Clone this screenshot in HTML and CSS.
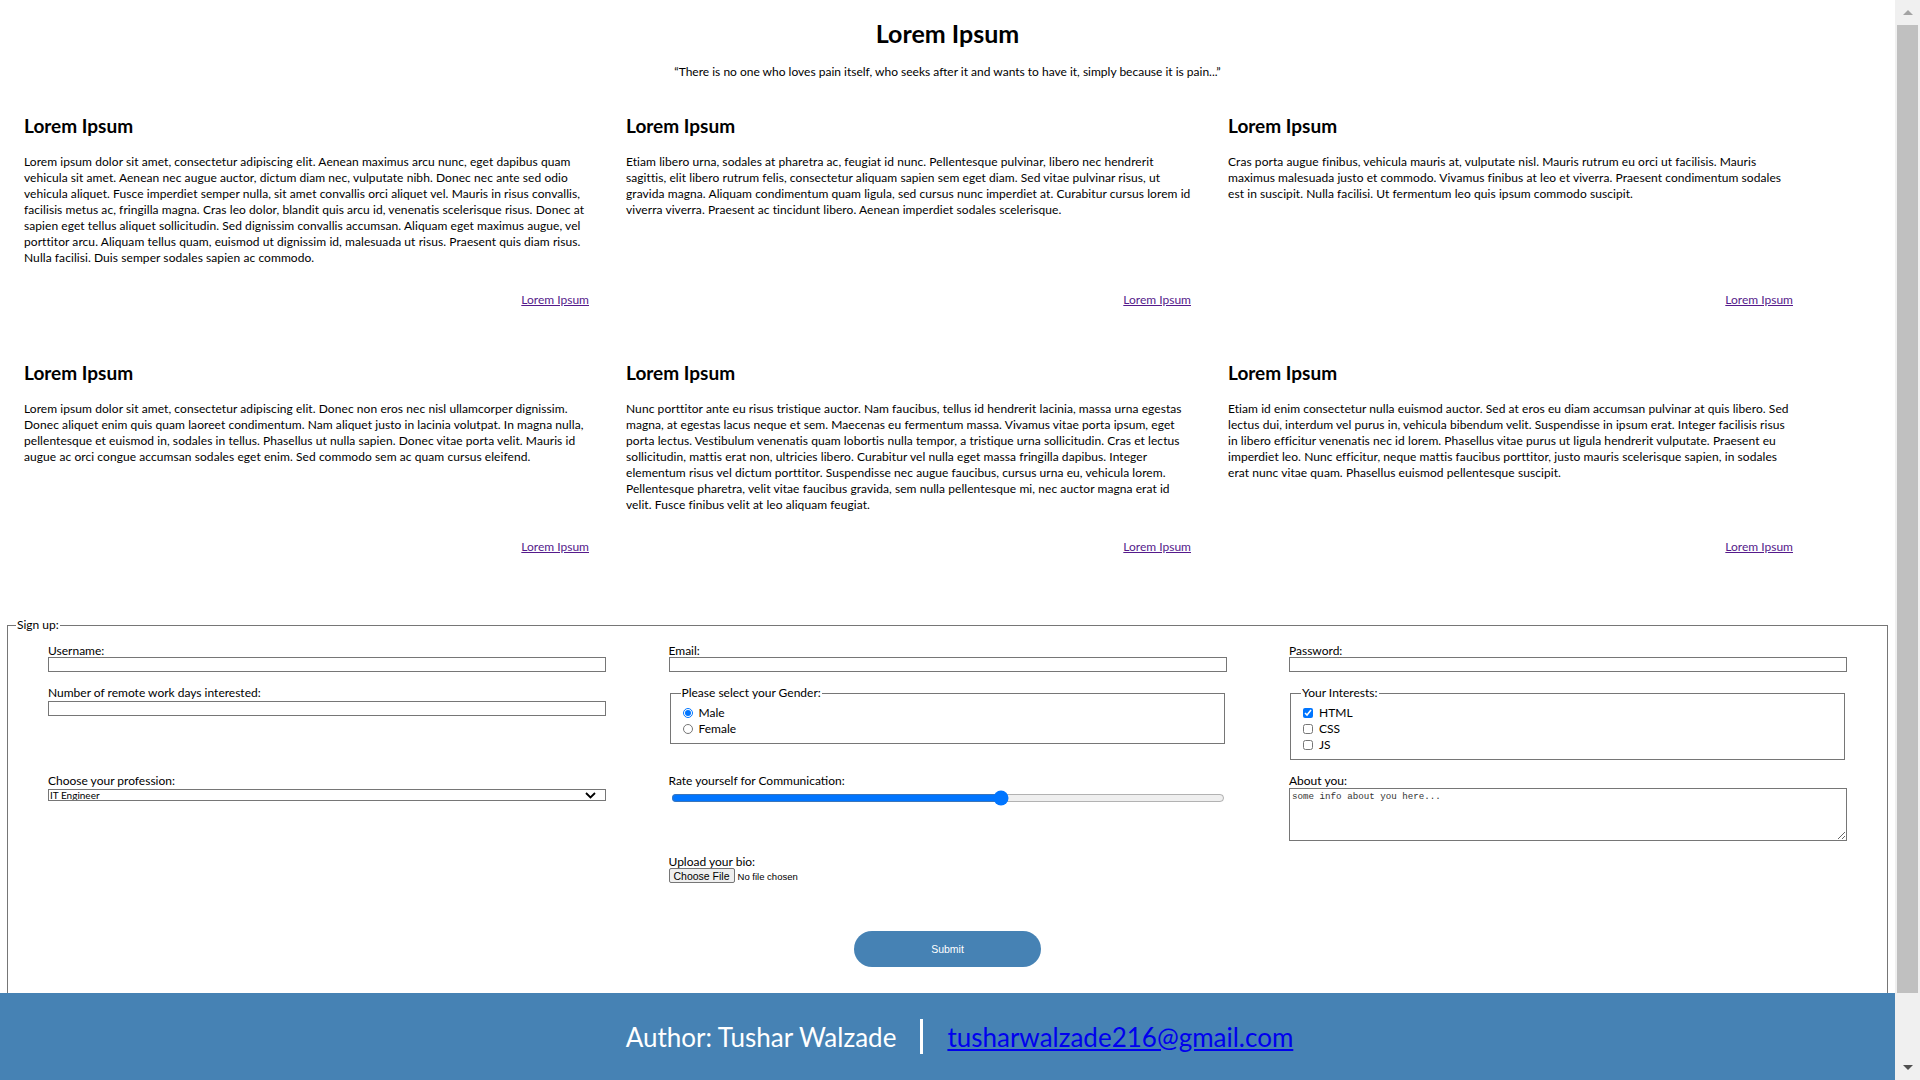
FILE: index.html
```html
<!DOCTYPE html>
<html lang="en">
<head>
<meta charset="utf-8">
<title>Lorem Ipsum</title>
<link rel="stylesheet" href="styles.css">
</head>
<body>
<div class="page">
  <header class="intro">
    <h1 class="title">Lorem Ipsum</h1>
    <p class="quote">“There is no one who loves pain itself, who seeks after it and wants to have it, simply because it is pain...”</p>
  </header>

  <main class="cards">
    <article class="card">
      <h3 class="card-title">Lorem Ipsum</h3>
      <p class="card-text">Lorem ipsum dolor sit amet, consectetur adipiscing elit. Aenean maximus arcu nunc, eget dapibus quam vehicula sit amet. Aenean nec augue auctor, dictum diam nec, vulputate nibh. Donec nec ante sed odio vehicula aliquet. Fusce imperdiet semper nulla, sit amet convallis orci aliquet vel. Mauris in risus convallis, facilisis metus ac, fringilla magna. Cras leo dolor, blandit quis arcu id, venenatis scelerisque risus. Donec at sapien eget tellus aliquet sollicitudin. Sed dignissim convallis accumsan. Aliquam eget maximus augue, vel porttitor arcu. Aliquam tellus quam, euismod ut dignissim id, malesuada ut risus. Praesent quis diam risus. Nulla facilisi. Duis semper sodales sapien ac commodo.</p>
      <p class="card-link"><a href="#">Lorem Ipsum</a></p>
    </article>
    <article class="card">
      <h3 class="card-title">Lorem Ipsum</h3>
      <p class="card-text">Etiam libero urna, sodales at pharetra ac, feugiat id nunc. Pellentesque pulvinar, libero nec hendrerit sagittis, elit libero rutrum felis, consectetur aliquam sapien sem eget diam. Sed vitae pulvinar risus, ut gravida magna. Aliquam condimentum quam ligula, sed cursus nunc imperdiet at. Curabitur cursus lorem id viverra viverra. Praesent ac tincidunt libero. Aenean imperdiet sodales scelerisque.</p>
      <p class="card-link"><a href="#">Lorem Ipsum</a></p>
    </article>
    <article class="card">
      <h3 class="card-title">Lorem Ipsum</h3>
      <p class="card-text">Cras porta augue finibus, vehicula mauris at, vulputate nisl. Mauris rutrum eu orci ut facilisis. Mauris maximus malesuada justo et commodo. Vivamus finibus at leo et viverra. Praesent condimentum sodales est in suscipit. Nulla facilisi. Ut fermentum leo quis ipsum commodo suscipit.</p>
      <p class="card-link"><a href="#">Lorem Ipsum</a></p>
    </article>
    <article class="card">
      <h3 class="card-title">Lorem Ipsum</h3>
      <p class="card-text">Lorem ipsum dolor sit amet, consectetur adipiscing elit. Donec non eros nec nisl ullamcorper dignissim. Donec aliquet enim quis quam laoreet condimentum. Nam aliquet justo in lacinia volutpat. In magna nulla, pellentesque et euismod in, sodales in tellus. Phasellus ut nulla sapien. Donec vitae porta velit. Mauris id augue ac orci congue accumsan sodales eget enim. Sed commodo sem ac quam cursus eleifend.</p>
      <p class="card-link"><a href="#">Lorem Ipsum</a></p>
    </article>
    <article class="card">
      <h3 class="card-title">Lorem Ipsum</h3>
      <p class="card-text">Nunc porttitor ante eu risus tristique auctor. Nam faucibus, tellus id hendrerit lacinia, massa urna egestas magna, at egestas lacus neque et sem. Maecenas eu fermentum massa. Vivamus vitae porta ipsum, eget porta lectus. Vestibulum venenatis quam lobortis nulla tempor, a tristique urna sollicitudin. Cras et lectus sollicitudin, mattis erat non, ultricies libero. Curabitur vel nulla eget massa fringilla dapibus. Integer elementum risus vel dictum porttitor. Suspendisse nec augue faucibus, cursus urna eu, vehicula lorem. Pellentesque pharetra, velit vitae faucibus gravida, sem nulla pellentesque mi, nec auctor magna erat id velit. Fusce finibus velit at leo aliquam feugiat.</p>
      <p class="card-link"><a href="#">Lorem Ipsum</a></p>
    </article>
    <article class="card">
      <h3 class="card-title">Lorem Ipsum</h3>
      <p class="card-text">Etiam id enim consectetur nulla euismod auctor. Sed at eros eu diam accumsan pulvinar at quis libero. Sed lectus dui, interdum vel purus in, vehicula bibendum velit. Suspendisse in ipsum erat. Integer facilisis risus in libero efficitur venenatis nec id lorem. Phasellus vitae purus ut ligula hendrerit vulputate. Praesent eu imperdiet leo. Nunc efficitur, neque mattis faucibus porttitor, justo mauris scelerisque sapien, in sodales erat nunc vitae quam. Phasellus euismod pellentesque suscipit.</p>
      <p class="card-link"><a href="#">Lorem Ipsum</a></p>
    </article>
  </main>

  <form class="signup" action="#">
    <fieldset class="signup-box">
      <legend class="signup-legend">Sign up:</legend>
      <div class="form-grid">
        <div class="field">
          <label class="field-label" for="username">Username:</label>
          <input class="text-input" id="username" type="text">
        </div>
        <div class="field">
          <label class="field-label" for="email">Email:</label>
          <input class="text-input" id="email" type="email">
        </div>
        <div class="field">
          <label class="field-label" for="password">Password:</label>
          <input class="text-input" id="password" type="password">
        </div>

        <div class="field">
          <label class="field-label" for="days">Number of remote work days interested:</label>
          <input class="text-input text-input-gap" id="days" type="text">
        </div>
        <fieldset class="group">
          <legend class="group-legend">Please select your Gender:</legend>
          <label class="option"><input class="radio" type="radio" name="gender" checked>Male</label>
          <label class="option"><input class="radio" type="radio" name="gender">Female</label>
        </fieldset>
        <fieldset class="group">
          <legend class="group-legend">Your Interests:</legend>
          <label class="option"><input class="check" type="checkbox" checked>HTML</label>
          <label class="option"><input class="check" type="checkbox">CSS</label>
          <label class="option"><input class="check" type="checkbox">JS</label>
        </fieldset>

        <div class="field">
          <label class="field-label" for="profession">Choose your profession:</label>
          <div class="select-wrap">
            <select class="select" id="profession">
              <option>IT Engineer</option>
              <option>Designer</option>
            </select>
            <svg class="select-arrow" width="11" height="7" viewBox="0 0 11 7" aria-hidden="true"><path d="M1 1 L5.5 5.5 L10 1" fill="none" stroke="#000" stroke-width="1.8"/></svg>
          </div>
        </div>
        <div class="field">
          <label class="field-label" for="rate">Rate yourself for Communication:</label>
          <input class="range" id="rate" type="range" min="0" max="100" value="60">
        </div>
        <div class="field">
          <label class="field-label" for="about">About you:</label>
          <textarea class="textarea" id="about" placeholder="some info about you here..."></textarea>
        </div>

        <div class="field"></div>
        <div class="field">
          <label class="field-label" for="bio">Upload your bio:</label>
          <input class="file" id="bio" type="file">
        </div>
        <div class="field"></div>
      </div>
      <div class="actions">
        <button class="submit" type="submit">Submit</button>
      </div>
    </fieldset>
  </form>

  <footer class="site-footer">
    <span class="author">Author: Tushar Walzade</span>
    <span class="divider"></span>
    <a class="mail" href="#">tusharwalzade216@gmail.com</a>
  </footer>
</div>

<div class="scrollbar" aria-hidden="true">
  <div class="sb-btn"><span class="sb-up"></span></div>
  <div class="sb-track"><div class="sb-thumb"></div></div>
  <div class="sb-btn"><span class="sb-down"></span></div>
</div>
</body>
</html>
```

FILE: styles.css
```css
html, body {
  margin: 0;
  padding: 0;
  background: #ffffff;
}

body {
  font-family: "Lato", "Open Sans", sans-serif;
  color: #000000;
  overflow: hidden;
}

.page {
  width: 1895px;
  height: 1080px;
  display: flex;
  flex-direction: column;
}

/* ---------- intro ---------- */
.intro {
  padding-top: 17px;
  text-align: center;
}

.title {
  margin: 0;
  font-size: 25px;
  line-height: 33px;
  font-weight: 700;
}

.quote {
  margin: 14px 0 0;
  font-size: 12px;
  line-height: 16px;
}

/* ---------- cards ---------- */
.cards {
  display: grid;
  grid-template-columns: repeat(3, 565px);
  column-gap: 37px;
  row-gap: 52px;
  padding-left: 24px;
  margin-top: 33px;
}

.card {
  display: flex;
  flex-direction: column;
}

.card-title {
  margin: 0;
  font-size: 19px;
  line-height: 25px;
  font-weight: 700;
}

.card-text {
  margin: 16px 0 26px;
  font-size: 12px;
  line-height: 16px;
  letter-spacing: 0.07px;
}

.card-link {
  margin: auto 0 0;
  font-size: 12px;
  line-height: 16px;
  text-align: right;
}

.card-link a {
  color: #551a8b;
}

/* ---------- form ---------- */
.signup {
  margin: 62px 7px 0;
}

.signup-box {
  margin: 0;
  padding: 0 8px 26px;
  border: 1px solid #767676;
  border-bottom: none;
  min-width: 0;
}

.signup-legend {
  padding: 0 1px;
  font-size: 12px;
  line-height: 16px;
}

.form-grid {
  display: grid;
  grid-template-columns: repeat(3, 558px);
  column-gap: 62.5px;
  row-gap: 14px;
  margin: 0 32px;
  padding-top: 11px;
  align-items: start;
}

.field {
  display: flex;
  flex-direction: column;
  align-items: stretch;
}

.field-label {
  display: block;
  font-size: 12px;
  line-height: 13px;
}

.text-input {
  display: block;
  box-sizing: border-box;
  width: 100%;
  height: 15px;
  margin: 0;
  padding: 0 2px;
  border: 1px solid #767676;
  border-radius: 0;
  font-size: 10px;
  font-family: inherit;
  background: #ffffff;
}

.text-input-gap {
  margin-top: 2px;
}

.group {
  margin: 0 2px 0 1px;
  padding: 5px 10px 6px;
  border: 1px solid #767676;
  min-width: 0;
}

.group-legend {
  padding: 0 1px;
  font-size: 12px;
  line-height: 14px;
}

.option {
  display: flex;
  align-items: center;
  height: 16px;
  font-size: 12px;
  line-height: 16px;
}

.radio,
.check {
  width: 10px;
  height: 10px;
  margin: 0 6px 0 2px;
}

.select-wrap {
  position: relative;
  margin-top: 2px;
}

.select {
  display: block;
  box-sizing: border-box;
  width: 100%;
  height: 12px;
  margin: 0;
  padding: 0 0 0 1px;
  border: 1px solid #767676;
  border-radius: 0;
  font-size: 10px;
  line-height: 10px;
  font-family: inherit;
  background: #ffffff;
  color: #000000;
  appearance: none;
  -webkit-appearance: none;
}

.select-arrow {
  position: absolute;
  right: 10px;
  top: 3px;
  pointer-events: none;
}

.range {
  display: block;
  box-sizing: border-box;
  width: calc(100% - 4px);
  height: 12px;
  margin: 5px 2px 0;
  padding: 0;
}

.textarea {
  display: block;
  box-sizing: border-box;
  width: 100%;
  height: 53px;
  margin: 1px 0 0;
  padding: 2px;
  border: 1px solid #767676;
  border-radius: 0;
  font-family: "Liberation Mono", monospace;
  font-size: 9.2px;
  line-height: 11px;
  resize: both;
}

.textarea::placeholder {
  color: #333333;
}

.file {
  display: block;
  margin: 0;
  height: 15px;
  font-family: "Liberation Sans", Arial, sans-serif;
  font-size: 9.5px;
}

.file::file-selector-button {
  font-family: "Liberation Sans", Arial, sans-serif;
  font-size: 10.5px;
  padding: 0 4px;
  height: 15px;
  margin-right: 3px;
  border: 1px solid #767676;
  border-radius: 2px;
  background: #efefef;
}

.actions {
  display: flex;
  justify-content: center;
  margin-top: 48px;
}

.submit {
  width: 187px;
  height: 36px;
  border: none;
  border-radius: 18px;
  background: #4682b4;
  color: #ffffff;
  font-family: "Liberation Sans", Arial, sans-serif;
  font-size: 10.5px;
}

/* ---------- footer ---------- */
.site-footer {
  flex: 1;
  display: flex;
  align-items: center;
  justify-content: center;
  gap: 24px;
  padding-left: 24px;
  background: #4682b4;
}

.author {
  color: #ffffff;
  font-size: 26px;
  line-height: 32px;
}

.divider {
  width: 3px;
  height: 35px;
  background: #ffffff;
}

.mail {
  color: #0000ee;
  font-size: 26px;
  line-height: 32px;
}

/* ---------- scrollbar ---------- */
.scrollbar {
  position: fixed;
  top: 0;
  right: 0;
  width: 25px;
  height: 100%;
  display: flex;
  flex-direction: column;
  background: #f0f0f0;
}

.sb-btn {
  height: 25px;
  display: flex;
  align-items: center;
  justify-content: center;
}

.sb-up {
  width: 0;
  height: 0;
  border-left: 5.5px solid transparent;
  border-right: 5.5px solid transparent;
  border-bottom: 5px solid #a3a3a3;
}

.sb-down {
  width: 0;
  height: 0;
  border-left: 5.5px solid transparent;
  border-right: 5.5px solid transparent;
  border-top: 5px solid #505050;
}

.sb-track {
  flex: 1;
  padding: 0 2px;
}

.sb-thumb {
  height: 968px;
  background: #c0c0c0;
}
```
